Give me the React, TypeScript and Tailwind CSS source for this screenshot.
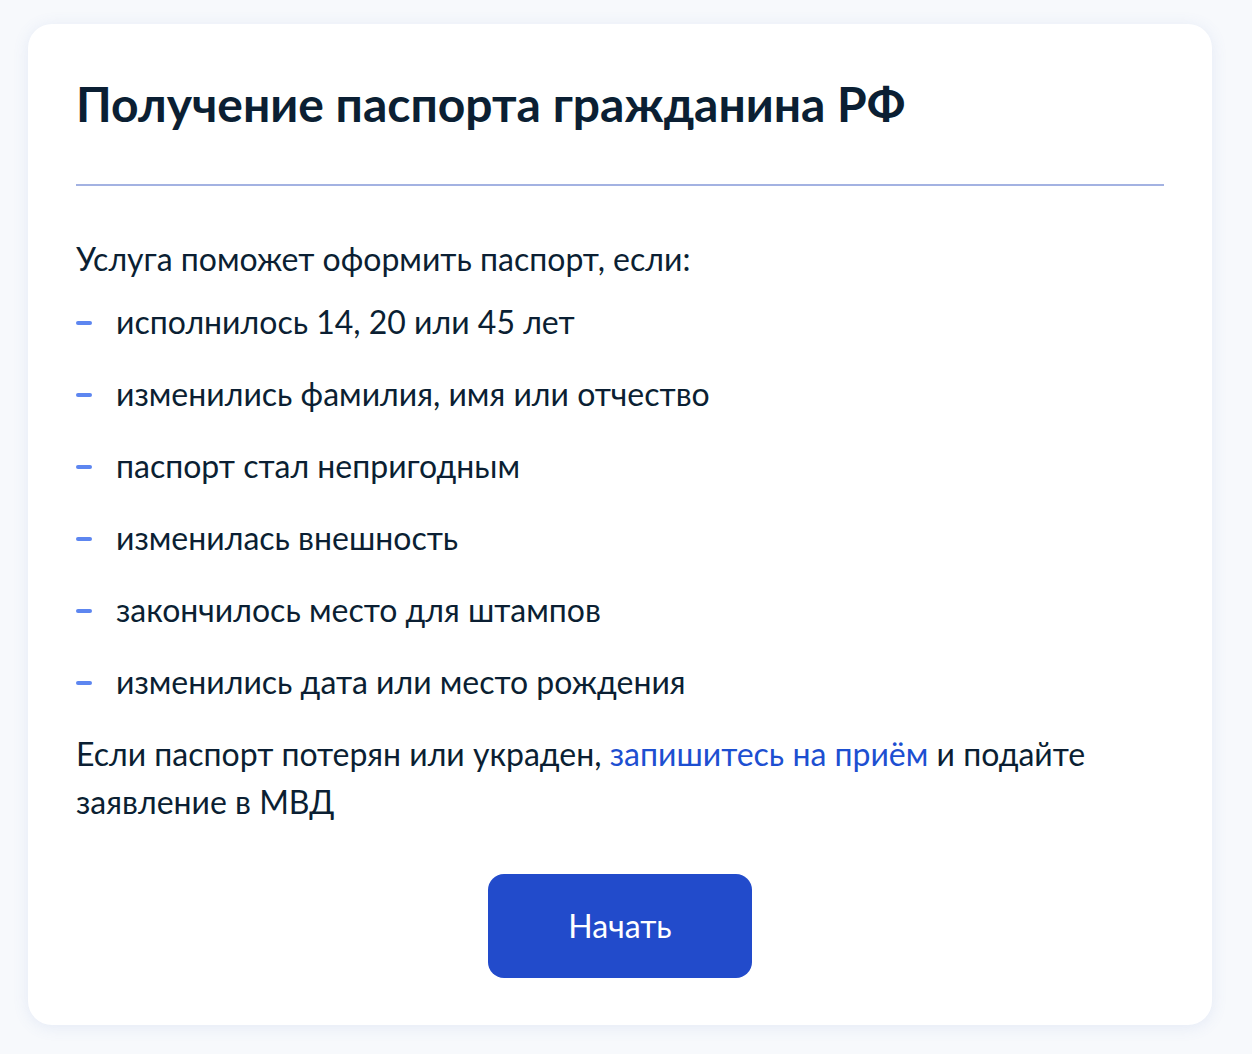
import React from "react";

const items = [
  "исполнилось 14, 20 или 45 лет",
  "изменились фамилия, имя или отчество",
  "паспорт стал непригодным",
  "изменилась внешность",
  "закончилось место для штампов",
  "изменились дата или место рождения",
];

export default function App() {
  return (
    <div
      className="min-h-[1054px] w-full bg-[#f7f9fc] pl-[28px] pr-[40px] pt-[24px] pb-[29px] text-[#0b1f33]"
      style={{ fontFamily: "Lato, 'Noto Sans', sans-serif" }}
    >
      <div className="rounded-[24px] bg-white px-[48px] pt-[48px] pb-[47px] shadow-[0_2px_16px_rgba(90,120,200,0.12)]">
        <h1 className="text-[48px] leading-[64px] font-bold">
          Получение паспорта гражданина РФ
        </h1>
        <div className="mt-[48px] h-[2px] bg-[#a3b2e2]" />
        <p className="mt-[49px] text-[32px] leading-[48px]">
          Услуга поможет оформить паспорт, если:
        </p>
        <ul className="mt-[15px] flex flex-col gap-[24px]">
          {items.map((t) => (
            <li key={t} className="flex text-[32px] leading-[48px]">
              <span className="flex w-[40px] shrink-0 items-center pt-[2px]">
                <span className="block h-[4px] w-[16px] rounded-full bg-[#5d86f0]" />
              </span>
              <span>{t}</span>
            </li>
          ))}
        </ul>
        <p className="mt-[24px] text-[32px] leading-[48px]">
          Если паспорт потерян или украден,{" "}
          <a className="text-[#1d4fd1]">запишитесь на приём</a> и подайте
          заявление в МВД
        </p>
        <div className="mt-[48px] flex justify-center">
          <button className="h-[104px] w-[264px] rounded-[16px] bg-[#224bcb] text-[32px] text-white">
            Начать
          </button>
        </div>
      </div>
    </div>
  );
}
